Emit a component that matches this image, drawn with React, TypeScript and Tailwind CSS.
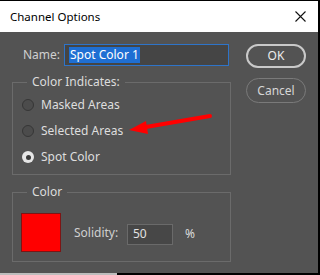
import React from "react";

const font = { fontFamily: '"Noto Sans", "Open Sans", sans-serif' };

function Radio({ checked, label }: { checked?: boolean; label: string }) {
  return (
    <div className="flex items-center h-[26px] pl-[9px]">
      {checked ? (
        <span className="w-[12px] h-[12px] rounded-full bg-[#e6e6e6] flex items-center justify-center">
          <span className="w-[5px] h-[5px] rounded-full bg-[#3a3a3a]" />
        </span>
      ) : (
        <span className="w-[12px] h-[12px] rounded-full border border-[#363636] bg-[#4c4c4c]" />
      )}
      <span className="ml-[7px] text-[12px] text-[#dedede] leading-none">{label}</span>
    </div>
  );
}

export default function App() {
  return (
    <div className="w-[320px] h-[275px] bg-black flex flex-col relative overflow-hidden" style={font}>
      <div className="h-[1px]" />
      <div className="h-[31px] bg-white mr-[2px] flex items-center justify-between pl-[10px] pr-[12px]">
        <span className="text-[11.5px] text-black">Channel Options</span>
        <svg width="11" height="11" viewBox="0 0 11 11">
          <path d="M0.5 0.5 L10.5 10.5 M10.5 0.5 L0.5 10.5" stroke="#111" strokeWidth="1.1" />
        </svg>
      </div>
      <div className="flex-1 bg-[#535353] mr-[2px] flex">
        <div className="w-[231px] pl-[12px] pt-[12px] flex flex-col">
          <div className="flex items-center h-[22px]">
            <span className="ml-[11px] w-[41px] text-[12px] text-[#d0d0d0]">Name:</span>
            <div className="w-[165px] h-[22px] border border-[#2e74c9] bg-[#454545] flex items-center pl-[4px]">
              <span className="bg-[#1f6fd3] text-white text-[12px] leading-[16px] px-[1px]">Spot Color 1</span>
            </div>
          </div>
          <fieldset className="mt-[7px] border border-[#6b6b6b] pb-[4px]">
            <legend className="ml-[14px] px-[5px] text-[12px] text-[#dcdcdc] leading-[18px]">Color Indicates:</legend>
            <div className="pt-[1px]">
              <Radio label="Masked Areas" />
              <Radio label="Selected Areas" />
              <Radio label="Spot Color" checked />
            </div>
          </fieldset>
          <fieldset className="mt-[8px] border border-[#6b6b6b] h-[79px]">
            <legend className="ml-[14px] px-[5px] text-[12px] text-[#dcdcdc] leading-[18px]">Color</legend>
            <div className="flex items-center pl-[8px] pt-[12px]">
              <div className="w-[40px] h-[39px] bg-[#ff0000] border border-[#7d1515]" />
              <span className="ml-[13px] w-[44px] text-[12px] text-[#d0d0d0]">Solidity:</span>
              <div className="ml-[9px] mt-[3px] w-[46px] h-[21px] bg-[#474747] border border-[#6a6a6a] flex items-center pl-[5px]">
                <span className="text-[12px] text-[#e2e2e2]">50</span>
              </div>
              <span className="ml-[12px] mt-[3px] text-[12px] text-[#dcdcdc]">%</span>
            </div>
          </fieldset>
        </div>
        <div className="pl-[15px] pt-[12px] flex flex-col">
          <div className="w-[60px] h-[24px] rounded-full border-2 border-[#c9c9c9] flex items-center justify-center text-[12px] text-[#ececec]">
            OK
          </div>
          <div className="mt-[10px] w-[60px] h-[25px] rounded-full border border-[#7a7a7a] flex items-center justify-center text-[12px] text-[#d6d6d6]">
            Cancel
          </div>
        </div>
      </div>
      <div className="h-[2px] flex">
        <div className="w-[117px] bg-[#bdbdbd]" />
      </div>
      <svg className="absolute left-0 top-0 pointer-events-none" width="320" height="275">
        <line x1="210" y1="116" x2="140" y2="128" stroke="#ff0000" strokeWidth="4" strokeLinecap="round" />
        <polygon points="129,130 146,121 148,134" fill="#ff0000" />
      </svg>
    </div>
  );
}
